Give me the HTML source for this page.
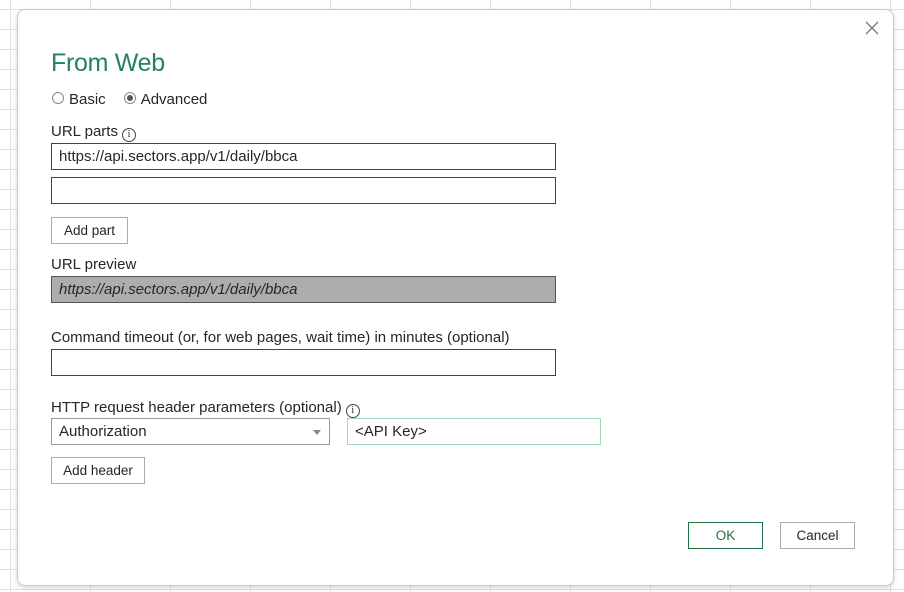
<!DOCTYPE html>
<html><head><style>
*{box-sizing:border-box;margin:0;padding:0}
body{width:904px;height:592px;overflow:hidden;font-family:"Liberation Sans",sans-serif;font-size:15px;color:#262626;
background-color:#fff;
background-image:linear-gradient(90deg,#e1e1e1 1px,transparent 1px),linear-gradient(#e1e1e1 1px,transparent 1px);
background-size:80px 20px;background-position:10px 9px;position:relative}
.dlg{position:absolute;left:17px;top:9px;width:877px;height:577px;background:#fff;border:1px solid #c8c8c8;border-radius:8px;box-shadow:0 2px 6px rgba(0,0,0,.15)}
.a{position:absolute;white-space:nowrap}
.box{position:absolute;border:1px solid #444;background:#fff;height:27px;padding-left:7px;line-height:25px;font-size:15px}
.btn{position:absolute;border:1px solid #ababab;background:#fff;font-size:13.5px;text-align:center;line-height:25px;height:27px}
.info{display:inline-block;width:14px;height:14px;border:1px solid #444;border-radius:50%;font-size:10px;line-height:12px;text-align:center;vertical-align:-1px;margin-left:4px;font-family:"Liberation Serif",serif}
.radio{display:inline-block;width:12px;height:12px;border:1px solid #888;border-radius:50%;vertical-align:0;margin-right:5px;position:relative}
</style></head><body>
<div class="dlg">
<svg class="a" style="left:847px;top:11px" width="14" height="14" viewBox="0 0 14 14"><path d="M1 1L13 13M13 1L1 13" stroke="#777" stroke-width="1.3"/></svg>
<div class="a" style="left:33px;top:39px;font-size:25px;color:#24806a;letter-spacing:-0.3px">From Web</div>
<div class="a" style="left:34px;top:81px"><span class="radio"></span>Basic<span style="display:inline-block;width:18px"></span><span class="radio"><span style="position:absolute;left:2px;top:2px;width:6px;height:6px;border-radius:50%;background:#555"></span></span>Advanced</div>
<div class="a" style="left:33px;top:113px">URL parts<span class="info">i</span></div>
<div class="box" style="left:33px;top:133px;width:505px">https://api.sectors.app/v1/daily/bbca</div>
<div class="box" style="left:33px;top:167px;width:505px"></div>
<div class="btn" style="left:33px;top:207px;width:77px">Add part</div>
<div class="a" style="left:33px;top:246px">URL preview</div>
<div class="box" style="left:33px;top:266px;width:505px;background:#adadad;font-style:italic;border-color:#555">https://api.sectors.app/v1/daily/bbca</div>
<div class="a" style="left:33px;top:319px">Command timeout (or, for web pages, wait time) in minutes (optional)</div>
<div class="box" style="left:33px;top:339px;width:505px"></div>
<div class="a" style="left:33px;top:389px">HTTP request header parameters (optional)<span class="info">i</span></div>
<div class="box" style="left:33px;top:408px;width:279px;border-color:#999">Authorization<span style="position:absolute;right:8px;top:11px;border:4px solid transparent;border-top:5px solid #888"></span></div>
<div class="box" style="left:329px;top:408px;width:254px;border-color:#9fd8b4">&lt;API Key&gt;</div>
<div class="btn" style="left:33px;top:447px;width:94px">Add header</div>
<div class="btn" style="left:670px;top:512px;width:75px;border-color:#217346;color:#217346">OK</div>
<div class="btn" style="left:762px;top:512px;width:75px">Cancel</div>
</div>
</body></html>
